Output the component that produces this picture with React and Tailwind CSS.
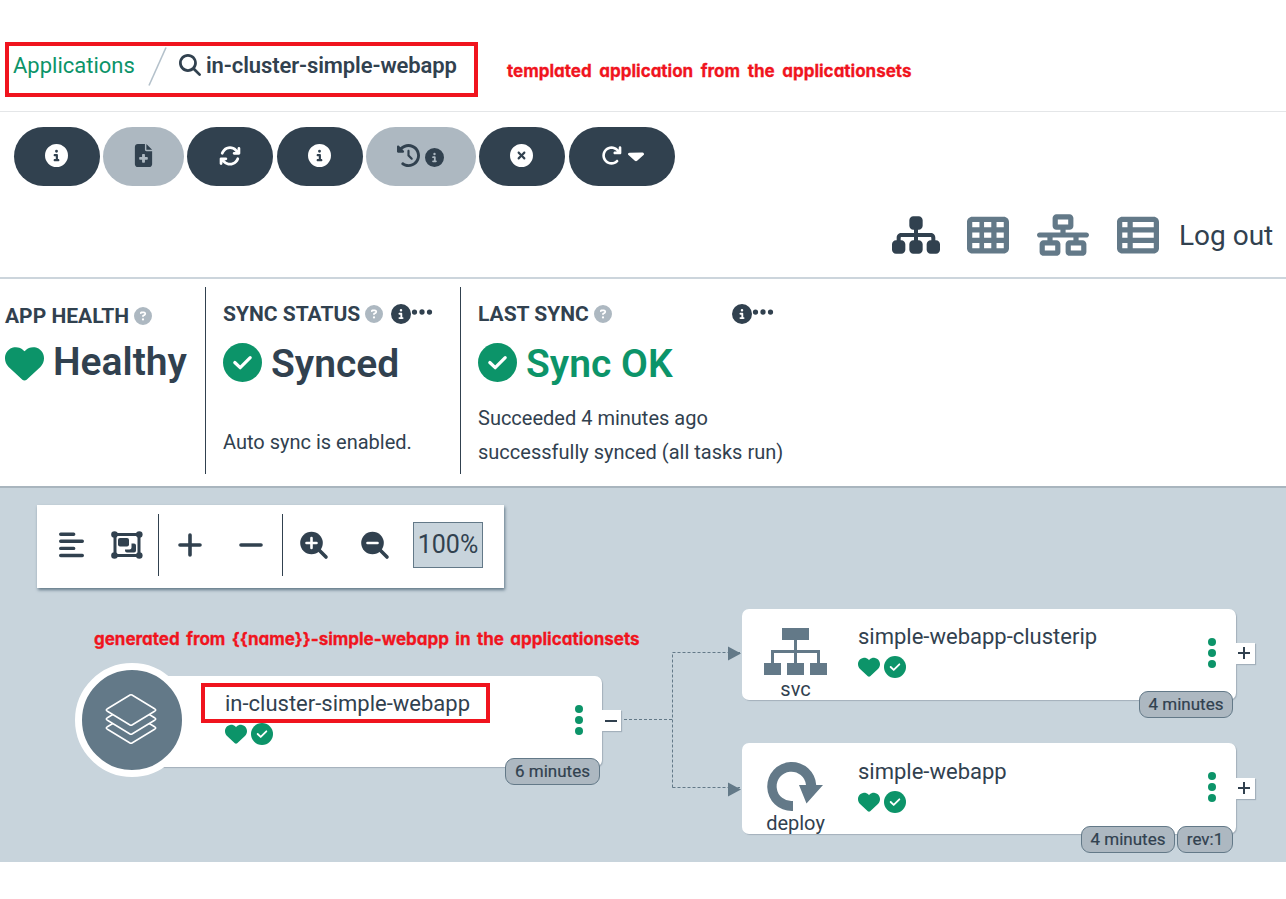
import {
  FaArrowRotateRight, FaArrowsRotate, FaCaretDown, FaCircleInfo, FaCircleQuestion,
  FaCircleXmark, FaClockRotateLeft, FaEllipsis, FaFileMedical, FaHeart, FaMagnifyingGlass,
  FaNetworkWired, FaSitemap, FaTableCells, FaTableList,
} from "react-icons/fa6";

function Note({ children, className }) {
  return (
    <span className={`whitespace-nowrap font-[Inter,sans-serif] text-[17px] font-bold leading-[24px] text-[#f0141e] [-webkit-text-stroke:0.3px_#f0141e] [font-feature-settings:'cv11'] ${className}`}>
      {children}
    </span>
  );
}

function CheckCircle({ className }) {
  return (
    <svg className={className} viewBox="0 0 39 39" fill="none">
      <circle cx="19.500" cy="19.500" r="19.500" fill="#0c9469" />
      <path d="m11.800 19.500 5.400 5.200 10-10" stroke="#fff" strokeWidth="3.200" strokeLinecap="round" strokeLinejoin="round" />
    </svg>
  );
}

function Pill({ className, muted, children }) {
  return (
    <button className={`flex h-[59px] items-center justify-center rounded-full pb-[2px] ${muted ? "bg-[#adb8c1] text-[#31414f]" : "bg-[#31414f] text-white"} ${className}`}>
      {children}
    </button>
  );
}

function Header() {
  return (
    <header className="flex h-[112px] items-start border-b border-[#e4e6e8] pl-[5px] pt-[42px]">
      <div className="flex h-[55px] w-[473px] items-center border-4 border-[#f0141e] pb-[9px] pl-[4px] text-[22px]">
        <a className="w-[121px] text-[#0c9469]">Applications</a>
        <svg className="ml-[14px] mt-[2px] h-[39px] w-[19px]" viewBox="0 0 19 39" fill="none" stroke="#b4c1cb" strokeWidth="1.6">
          <path d="M1 38.5 18 .5" />
        </svg>
        <FaMagnifyingGlass className="ml-[12px] size-[22px]" />
        <h1 className="ml-[5px] whitespace-nowrap font-semibold tracking-[-0.1px]">in-cluster-simple-webapp</h1>
      </div>
      <Note className="ml-[29px] mt-[17px] [word-spacing:3.600px]">templated application from the applicationsets</Note>
    </header>
  );
}

function Actions() {
  return (
    <div className="flex h-[74px] gap-[3px] pl-[14px] pt-[15px]">
      <Pill className="w-[86px] pr-px"><FaCircleInfo className="size-[23px]" /></Pill>
      <Pill muted className="w-[81px]"><FaFileMedical className="size-[23px]" /></Pill>
      <Pill className="w-[86px]"><FaArrowsRotate className="size-[22px]" /></Pill>
      <Pill className="ml-px w-[86px] pr-px"><FaCircleInfo className="size-[23px]" /></Pill>
      <Pill muted className="w-[110px] gap-[5px] pr-[2px]">
        <FaClockRotateLeft className="size-[23px]" />
        <FaCircleInfo className="mt-[3px] size-[19px]" />
      </Pill>
      <Pill className="w-[86px] pr-px"><FaCircleXmark className="size-[23px]" /></Pill>
      <Pill className="ml-px w-[106px] gap-[6px]">
        <FaArrowRotateRight className="size-[21px]" />
        <FaCaretDown className="h-[23px] w-[16px]" preserveAspectRatio="none" />
      </Pill>
    </div>
  );
}

function Views() {
  return (
    <div className="flex h-[93px] items-center justify-end border-b-2 border-[#ccd5dc] pr-[13px] pt-[8px] text-[#637988]">
      <FaSitemap className="-mt-px size-[48px] text-[#31414f]" />
      <FaTableCells className="-mt-px ml-[27px] size-[42px]" />
      <FaNetworkWired className="-mt-px ml-[28px] size-[52px]" />
      <FaTableList className="-mt-px ml-[28px] size-[42px]" />
      <a className="ml-[20px] w-[94px] whitespace-nowrap text-[28px] text-[#31414f]">Log out</a>
    </div>
  );
}

function Label({ children, more }) {
  return (
    <div className="flex h-[24px] items-center whitespace-nowrap text-[21px] font-bold">
      <span className="pt-[2px]">{children}</span>
      <FaCircleQuestion className="ml-[5px] size-[18px] text-[#adb8c1]" />
      {more && (
        <span className={`flex items-center ${more}`}>
          <FaCircleInfo className="size-[20px]" />
          <FaEllipsis className="-ml-px -mt-[5px] size-[24px]" />
        </span>
      )}
    </div>
  );
}

function Status() {
  return (
    <section className="flex h-[207px] pt-[8px]">
      <div className="w-[205px] pl-[5px] pt-[17px]">
        <Label>APP HEALTH</Label>
        <div className="mt-[10px] flex h-[48px] items-center gap-[9px] text-[39px] font-semibold">
          <FaHeart className="mt-[2px] size-[39px] text-[#0c9469]" />
          Healthy
        </div>
      </div>
      <div className="h-[187px] w-[255px] border-l border-[#31414f] pl-[17px] pt-[15px]">
        <Label more="ml-[8px]">SYNC STATUS</Label>
        <div className="mt-[14px] flex h-[48px] items-center gap-[9px] text-[39px] font-semibold">
          <CheckCircle className="-mt-[3px] size-[39px]" />
          Synced
        </div>
        <p className="mt-[42px] text-[20px] leading-[24px]">Auto sync is enabled.</p>
      </div>
      <div className="h-[187px] w-[400px] border-l border-[#31414f] pl-[17px] pt-[15px]">
        <Label more="ml-[120px]">LAST SYNC</Label>
        <div className="mt-[14px] flex h-[48px] items-center gap-[9px] text-[39px] font-semibold text-[#0c9469]">
          <CheckCircle className="-mt-[3px] size-[39px]" />
          Sync OK
        </div>
        <p className="mt-[13px] text-[20px] leading-[34px]">
          Succeeded 4 minutes ago
          <br />
          successfully synced (all tasks run)
        </p>
      </div>
    </section>
  );
}

function Zoom({ plus }) {
  return (
    <svg className="size-[29px]" viewBox="0 0 29 29" fill="none" strokeLinecap="round">
      <circle cx="11.500" cy="12" r="11.300" fill="#31414f" />
      <path d="m19 19 7 7" stroke="#31414f" strokeWidth="3.600" />
      <path d={plus ? "M6.500 12h10M11.500 7v10" : "M6.500 12h10"} stroke="#fff" strokeWidth="2.600" />
    </svg>
  );
}

function Toolbar() {
  return (
    <div className="ml-[37px] flex h-[83px] w-[467px] items-center bg-white pb-[3px] shadow-[1px_2px_3px_#637988]">
      <svg className="ml-[22px] h-[26px] w-[25px]" viewBox="0 0 25 26" stroke="#31414f" strokeWidth="3.4" strokeLinecap="round">
        <path d="M1.7 2.2h13M1.7 9.2h21.6M1.7 16.4h13M1.7 23.500h21.6" />
      </svg>
      <svg className="ml-[27px] h-[28px] w-[32px]" viewBox="0 0 32 28" fill="#31414f">
        <path d="M4 3.500h24v21H4z" fill="none" stroke="#31414f" strokeWidth="3" />
        <circle cx="3.500" cy="3.500" r="3.300" /><circle cx="28.300" cy="3.500" r="3.300" />
        <circle cx="3.500" cy="24.500" r="3.300" /><circle cx="28.300" cy="24.500" r="3.300" />
        <rect x="7" y="7" width="11" height="8.500" rx="2" />
        <path d="M20.500 12.500h2.500q2 0 2 2v5q0 2-2 2h-7q-2 0-2-2v-1h4.500q2 0 2-2z" />
      </svg>
      <div className="ml-[15px] h-[62px] w-px bg-[#31414f]" />
      <svg className="ml-[19px] size-[24px]" viewBox="0 0 24 24" stroke="#31414f" strokeWidth="3.6" strokeLinecap="round">
        <path d="M2 12h20M12 2v20" />
      </svg>
      <svg className="ml-[37px] size-[24px]" viewBox="0 0 24 24" stroke="#31414f" strokeWidth="3.6" strokeLinecap="round">
        <path d="M2 12h20" />
      </svg>
      <div className="ml-[19px] h-[62px] w-px bg-[#31414f]" />
      <div className="ml-[17px] flex gap-[32px]"><Zoom plus /><Zoom /></div>
      <div className="ml-[23px] flex h-[46px] w-[70px] items-center justify-center border border-[#637988] bg-[#c8d4dc] text-[25px]">100%</div>
    </div>
  );
}

function Badge({ children, className }) {
  return (
    <span className={`flex h-[27px] items-center justify-center whitespace-nowrap rounded-[9px] border border-[#637988] bg-[#adb8c1] text-[17px] [-webkit-text-stroke:0.2px_#31414f] ${className}`}>
      {children}
    </span>
  );
}

function Node({ className, title, kind, icon, badges, open }) {
  return (
    <article className={`absolute h-[91px] rounded-[7px] bg-white shadow-[1px_1px_1px_#a3b0bb] ${className}`}>
      {icon && <div className="absolute left-[13px] top-[19px] flex w-[80px] justify-center">{icon}</div>}
      {kind && (
        <span className="absolute left-[13px] top-[68px] w-[81px] text-center text-[20px] leading-[24px]">{kind}</span>
      )}
      <div className="pl-[116px] pt-[13px]">
        <h2 className="whitespace-nowrap text-[22px] leading-[30px]">{title}</h2>
        <div className="mt-[4px] flex items-center gap-[4px] text-[#0c9469]">
          <FaHeart className="size-[22px]" />
          <CheckCircle className="size-[22px]" />
        </div>
      </div>
      <div className={`absolute top-[29px] flex flex-col gap-[3px] ${open ? "right-[19px]" : "right-[20px]"}`}>
        <i className="size-[8px] rounded-full bg-[#0c9469]" />
        <i className="size-[8px] rounded-full bg-[#0c9469]" />
        <i className="size-[8px] rounded-full bg-[#0c9469]" />
      </div>
      <button className={`absolute -right-[19px] flex h-[21px] w-[19px] items-center justify-center bg-white shadow-[1px_1px_1px_#a3b0bb] ${kind === "deploy" ? "top-[35px]" : "top-[34px]"} ${open ? "pr-px" : "pb-[2px] pr-[3px]"}`}>
        <svg className="size-[12px]" viewBox="0 0 12 12" stroke="#31414f" strokeWidth="2">
          <path d={open ? "M0 6h12" : "M0 6h12M6 0v12"} />
        </svg>
      </button>
      <div className={`absolute right-[3px] flex gap-[2px] ${kind === "deploy" ? "top-[83px]" : "top-[82px]"}`}>{badges}</div>
    </article>
  );
}

function ServiceIcon() {
  return (
    <svg className="h-[48px] w-[63px]" viewBox="0 0 63 48" fill="#637988">
      <path d="M18 0h27v12H18zM0 35h17v12H0zM23 35h17v12H23zM46 35h17v12H46z" />
      <path d="M31.500 12v23M8.500 35V23.500h46V35" fill="none" stroke="#637988" strokeWidth="3" />
    </svg>
  );
}

function DeployIcon() {
  return (
    <svg className="h-[50px] w-[57px]" viewBox="0 0 57 50" fill="#637988">
      <path d="M26 39v10h-1a24.500 24.500 0 1 1 24.200-26H56L39.500 41.500 32 23h7A14.700 14.700 0 1 0 26 39z" />
    </svg>
  );
}

function Graph() {
  return (
    <main className="relative h-[376px] border-t-2 border-[#a9b5be] bg-[#c8d4dc] pt-[17px]">
      <Toolbar />
      <Note className="absolute left-[94px] top-[139px] [word-spacing:2.400px]">{"generated from {{name}}-simple-webapp in the applicationsets"}</Note>
      <svg className="absolute left-[620px] top-[156px] h-[156px] w-[124px]" viewBox="0 0 124 156" fill="none">
        <path d="M4 75.500h48.500M52.500 143.500V8.500H120M52.500 143.500H120" stroke="#637988" strokeDasharray="3 2" />
        <path d="M108 2.500 121 9.500l-13 7zM108 138.500l13 7-13 7z" fill="#637988" />
      </svg>
      <Node className="left-[109px] top-[188px] w-[493px]" title="in-cluster-simple-webapp" open badges={<Badge className="-mr-px w-[95px]">6 minutes</Badge>} />
      <div className="absolute left-[75px] top-[175px] flex size-[114px] items-center justify-center rounded-full border-[7px] border-white bg-[#637988]">
        <svg className="-ml-[2px] -mt-[2px] size-[52px]" viewBox="0 0 52 52" fill="#637988" stroke="#fff" strokeWidth="1.500" strokeLinejoin="round">
          <path d="M25 20q1-.6 2 0l23 14q1.500 1 0 2L27 50q-1 .6-2 0L2 36q-1.500-1 0-2z" />
          <path d="M25 11q1-.6 2 0l23 14q1.500 1 0 2L27 41q-1 .6-2 0L2 27q-1.500-1 0-2z" />
          <path d="M25 2q1-.6 2 0l23 14q1.500 1 0 2L27 32q-1 .6-2 0L2 18q-1.500-1 0-2z" />
        </svg>
      </div>
      <div className="absolute left-[201px] top-[195px] h-[40px] w-[289px] border-4 border-[#f0141e]" />
      <Node className="left-[742px] top-[121px] w-[494px]" title="simple-webapp-clusterip" kind="svc" icon={<ServiceIcon />} badges={<Badge className="w-[94px]">4 minutes</Badge>} />
      <Node className="left-[742px] top-[255px] w-[494px] [&_h2]:pt-px" title="simple-webapp" kind="deploy" icon={<DeployIcon />} badges={<><Badge className="w-[94px]">4 minutes</Badge><Badge className="w-[56px]">rev:1</Badge></>} />
    </main>
  );
}

export default function App() {
  return (
    <div className="h-[899px] w-[1286px] overflow-hidden bg-white font-[Roboto,sans-serif] text-[#31414f]">
      <Header />
      <Actions />
      <Views />
      <Status />
      <Graph />
    </div>
  );
}
